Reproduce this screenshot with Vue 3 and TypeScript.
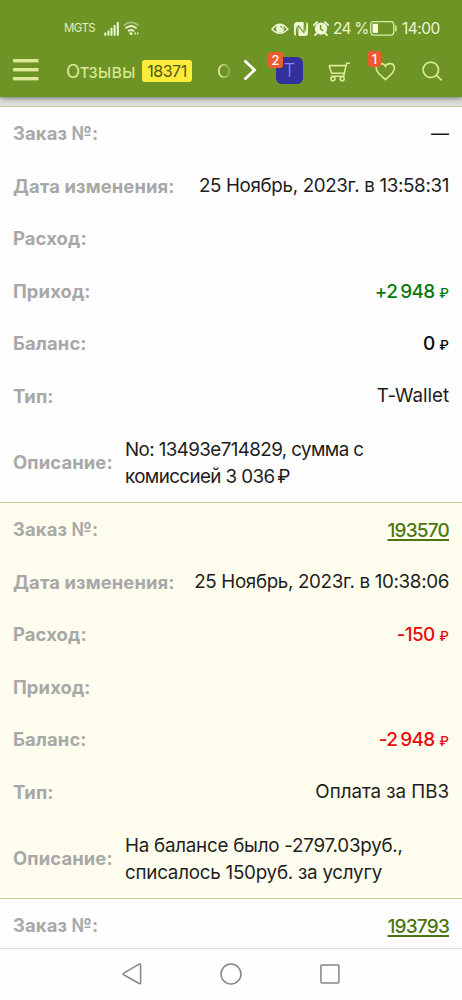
<script setup lang="ts">
interface Entry {
  label: string
  value: string
  kind?: 'plain' | 'plus' | 'minus' | 'zero' | 'link' | 'dash' | 'note' | 'date' | 'type'
}
interface Operation {
  id: number
  tinted: boolean
  entries: Entry[]
}

const operations: Operation[] = [
  {
    id: 1,
    tinted: false,
    entries: [
      { label: 'Заказ №:', value: '—', kind: 'dash' },
      { label: 'Дата изменения:', value: '25 Ноябрь, 2023г. в 13:58:31', kind: 'date' },
      { label: 'Расход:', value: '' },
      { label: 'Приход:', value: '+2 948', kind: 'plus' },
      { label: 'Баланс:', value: '0', kind: 'zero' },
      { label: 'Тип:', value: 'T-Wallet', kind: 'type' },
      { label: 'Описание:', value: 'No: 13493e714829, сумма с\nкомиссией 3 036\u2009₽', kind: 'note' },
    ],
  },
  {
    id: 2,
    tinted: true,
    entries: [
      { label: 'Заказ №:', value: '193570', kind: 'link' },
      { label: 'Дата изменения:', value: '25 Ноябрь, 2023г. в 10:38:06', kind: 'date' },
      { label: 'Расход:', value: '-150', kind: 'minus' },
      { label: 'Приход:', value: '' },
      { label: 'Баланс:', value: '-2 948', kind: 'minus' },
      { label: 'Тип:', value: 'Оплата за ПВЗ', kind: 'type' },
      { label: 'Описание:', value: 'На балансе было -2797.03руб.,\nсписалось 150руб. за услугу', kind: 'note' },
    ],
  },
  { id: 3, tinted: false, entries: [{ label: 'Заказ №:', value: '193793', kind: 'link' }] },
]

const isMoney = (e: Entry) => e.kind === 'plus' || e.kind === 'minus' || e.kind === 'zero'
</script>

<template>
  <div class="screen">
    <header class="top">
      <div class="status">
        <span class="carrier">MGTS</span>
        <svg class="signal" width="16" height="14" viewBox="0 0 16 14" fill="#eef6d4">
          <rect x="0.3" y="10.5" width="2" height="3.2" rx=".6" /><rect x="3.4" y="8.4" width="2" height="5.3" rx=".6" />
          <rect x="6.5" y="5.8" width="2" height="7.9" rx=".6" /><rect x="9.6" y="3" width="2" height="10.7" rx=".6" />
          <rect x="12.8" y="0" width="2" height="13.7" rx=".6" />
        </svg>
        <svg class="wifi" width="18" height="15" viewBox="0 0 18 15" fill="none" stroke-width="1.8">
          <path d="M.8 4.6Q8-1.8 15.6 4.6" stroke="#a9c276" />
          <path d="M2.6 7.4Q8.2 2.7 13.6 7.4M5.2 10.2Q8.2 7.7 11.1 10.2" stroke="#eef6d4" />
          <circle cx="8" cy="12.6" r="1.5" fill="#eef6d4" />
          <path d="M12.8 10.6l-1.8 1.8 1.8 1.8zM14.2 10.6l1.8 1.8-1.8 1.8z" fill="#dce9b6" />
        </svg>
        <span class="gap"></span>
        <svg class="eye" width="18" height="14" viewBox="0 0 18 14">
          <path d="M1 7.3Q8.8-2.9 16.8 7.3Q8.8 15.4 1 7.3Z" fill="none" stroke="#eef6d4" stroke-width="1.5" />
          <circle cx="9" cy="6.7" r="3.9" fill="#eef6d4" /><path d="M9 4.2A2.2 2.2 0 0 1 11.2 6.4" fill="none" stroke="#6d9425" stroke-width="1" />
        </svg>
        <svg class="nfc" width="14" height="14" viewBox="0 0 14 14">
          <path d="M3 0H9.4L12.2 11V0Q14 .4 14 3V11Q14 14 11 14H4.8L1.9 3V14Q0 13.4 0 11V3Q0 0 3 0Z" fill="#eef6d4" />
          <path d="M3.9 11.2V4.4M10.2 9.8V2.8M4 3.4L10.2 10.8" fill="none" stroke="#6d9425" stroke-width="1.1" />
        </svg>
        <svg class="alarm" width="16" height="15" viewBox="0 0 16 15">
          <circle cx="8" cy="7.6" r="6.2" fill="#eef6d4" />
          <path d="M.9 4.2L4 1.1M15.1 4.2L12 1.1M3.8 12.2L2.2 14M12.2 12.2L13.8 14" stroke="#eef6d4" stroke-width="1.9" stroke-linecap="round" />
          <path d="M7.6 4V8L10.3 9.9" stroke="#6d9425" stroke-width="1.4" fill="none" />
        </svg>
        <span class="percent">24 %</span>
        <svg class="battery" width="27" height="15" viewBox="0 0 27 15">
          <rect x=".7" y=".7" width="23" height="13.4" rx="2.8" fill="none" stroke="#d9e8af" stroke-width="1.3" />
          <rect x="2.6" y="2.7" width="5.4" height="9.4" rx="1" fill="#f4fadf" />
          <path d="M25.8 4.5V10.3" stroke="#d9e8af" stroke-width="1.6" />
        </svg>
        <span class="clock">14:00</span>
      </div>

      <nav class="bar">
        <svg class="burger" width="26" height="22" viewBox="0 0 26 22" fill="#dcea98">
          <rect y="0" width="25.5" height="3.4" /><rect y="9" width="25.5" height="3.4" /><rect y="18" width="25.5" height="3.4" />
        </svg>
        <span class="tab">Отзывы</span>
        <span class="count">18371</span>
        <span class="next">О</span>
        <svg class="chevron" width="14" height="22" viewBox="0 0 14 22" fill="none" stroke="#fff" stroke-width="2.8">
          <path d="M1.5 1.5L11.5 11L1.5 20.5" />
        </svg>
        <div class="avatar">T<span class="badge">2</span></div>
        <svg class="cart" width="23" height="20" viewBox="0 0 23 20" fill="none" stroke="#dcea98" stroke-width="1.6">
          <path d="M22 1.2H18.6L15.6 14.2H3.2M1 3.6H17.8M1 3.6L3.6 11.2H16" />
          <circle cx="4.9" cy="16.8" r="2" /><circle cx="14.2" cy="16.8" r="2" />
        </svg>
        <div class="wish">
          <svg width="21" height="19" viewBox="0 0 21 19" fill="none" stroke="#dcea98" stroke-width="1.6">
            <path d="M10.4 17.6C7.5 14.6 1.2 11 1.2 6.2C1.2 3.2 3.2 1.6 5.6 1.6C8 1.6 9.6 2.4 10.4 4.2C11.2 2.4 12.8 1.6 15 1.6C17.5 1.6 19.4 3.4 19.4 6.2C19.4 11 13.4 14.6 10.4 17.6Z" />
          </svg>
          <span class="badge one">1</span>
        </div>
        <svg class="search" width="21" height="21" viewBox="0 0 21 21" fill="none" stroke="#dcea98" stroke-width="1.7">
          <circle cx="8.8" cy="8.8" r="7.7" /><path d="M14.2 14.2L19.8 19.4" />
        </svg>
      </nav>
    </header>

    <main class="list">
      <section v-for="op in operations" :key="op.id" class="operation" :class="{ tinted: op.tinted }">
        <div v-for="entry in op.entries" :key="entry.label" class="row" :class="{ tall: entry.kind === 'note' }">
          <span class="label">{{ entry.label }}</span>
          <span v-if="isMoney(entry)" class="money" :class="entry.kind">{{ entry.value }}<small>₽</small></span>
          <a v-else-if="entry.kind === 'link'" class="link">{{ entry.value }}</a>
          <span v-else class="value" :class="entry.kind">{{ entry.value }}</span>
        </div>
      </section>
    </main>

    <footer class="system">
      <svg width="20" height="22" viewBox="0 0 20 22"><path d="M17.2 1.2Q18.6.6 18.6 2V19.8Q18.6 21.2 17.2 20.5L1.8 11.9Q.6 11 1.8 10.1Z" /></svg>
      <svg width="22" height="22" viewBox="0 0 22 22"><circle cx="11" cy="11" r="10" /></svg>
      <svg width="20" height="20" viewBox="0 0 20 20"><rect x=".9" y=".9" width="18" height="18" rx="1" /></svg>
    </footer>
  </div>
</template>

<style>
body { margin: 0; background: #fff; }
</style>

<style scoped>
.screen {
  width: 462px; height: 1000px; overflow: hidden; display: flex; flex-direction: column;
  background: #fefefe; color: #1d1d1d; font-family: Inter, "Noto Sans", "Liberation Sans", sans-serif;
}
.top { height: 97px; flex: none; background: #6d9425; position: relative; z-index: 1; box-shadow: 0 1px 5px rgba(0, 0, 0, .5); }
.status { height: 42px; padding: 15px 21px 0 64px; display: flex; align-items: center; box-sizing: border-box; color: #eef6d4; line-height: 1; }
.carrier { width: 40px; font-size: 11.4px; letter-spacing: -.5px; color: #e3efc0; }
.wifi { margin-left: 3px; }
.gap { flex: 1; }
.eye { margin-right: 1px; }
.nfc { margin-left: 4px; }
.alarm { margin-left: 5px; }
.percent { width: 35px; margin-left: 4px; font-size: 15.5px; letter-spacing: -.8px; white-space: nowrap; }
.battery { margin-left: 2px; }
.clock { width: 39px; margin-left: 5px; font-size: 15.5px; letter-spacing: -.5px; white-space: nowrap; }
.bar { height: 55px; display: flex; align-items: center; padding: 0 0 0 13px; box-sizing: border-box; color: #dcea98; }
.burger { margin-top: 1px; }
.tab { margin-left: 27px; width: 76px; font-size: 18.5px; letter-spacing: .05px; margin-top: 2px; }
.count { width: 50px; height: 22px; line-height: 22px; margin-top: 2px; border-radius: 3px; background: #ffeb3b; color: #4b5a16; text-align: center; font-size: 16px; letter-spacing: -.5px; }
.next { margin: 2px 0 0 25px; width: 18px; overflow: hidden; font-size: 18.5px; -webkit-mask-image: linear-gradient(90deg, #000 10%, transparent 95%); mask-image: linear-gradient(90deg, #000 10%, transparent 95%); }
.chevron { margin-left: 8px; }
.avatar { position: relative; margin: 1px 0 0 19px; width: 27px; height: 27px; border-radius: 6px; background: #33309c; color: #8d87ee; text-align: center; line-height: 27px; font-size: 18px; font-weight: 300; }
.badge { position: absolute; left: -8px; top: -5px; width: 15px; height: 16px; line-height: 16px; border-radius: 3px; background: #ee5a2d; color: #fff; font-size: 13px; font-weight: 500; text-align: center; }
.cart { margin: 5px 0 0 25px; }
.wish { position: relative; margin-left: 24px; width: 21px; height: 19px; }
.wish svg { display: block; margin-top: 2px; }
.badge.one { left: -7px; top: -9px; width: 13px; }
.search { margin: 4px 0 0 26px; }
.list { flex: 1; min-height: 0; overflow: hidden; padding-top: 9px; background: #dcdddb; }
.operation { background: #fefefe; border-top: 1px solid #c3d0a0; }
.operation.tinted { background: #fffded; }
.row { display: flex; align-items: center; justify-content: space-between; padding: 0 13px; line-height: 26px; height: 52.5px; box-sizing: border-box; white-space: nowrap; }
.row.tall { height: 80px; }
.label { color: #a8a8a8; font-size: 18.4px; font-weight: 650; letter-spacing: .12px; }
.value { font-size: 18.8px; letter-spacing: -.35px; margin-top: 1px; }
.type { letter-spacing: -.05px; }
.note { width: 324px; white-space: pre; line-height: 27px; letter-spacing: -.6px; margin-top: 2px; }
.tinted .note { letter-spacing: -.24px; }
.dash { font-size: 18px; letter-spacing: 0; margin-top: 2px; }
.money { font-size: 19px; font-weight: 500; letter-spacing: -.8px; word-spacing: -1px; margin-top: 2px; }
.money small { font-size: 13.5px; line-height: 0; margin-left: 5px; letter-spacing: 0; }
.plus { color: #087a08; }
.minus { color: #e60d0d; }
.zero { color: #080808; }
.link { color: #4d7410; font-size: 19px; font-weight: 500; letter-spacing: -.8px; margin-top: 3px; text-decoration: underline; text-decoration-thickness: 1.5px; text-underline-offset: 2px; }
.system { height: 52px; flex: none; border-top: 1px solid #dedede; box-sizing: border-box; background: #fefefe; display: flex; align-items: center; justify-content: center; gap: 78px; padding-right: 1px; padding-bottom: 1px; }
.system svg { fill: none; stroke: #858585; stroke-width: 1.5; }
</style>
